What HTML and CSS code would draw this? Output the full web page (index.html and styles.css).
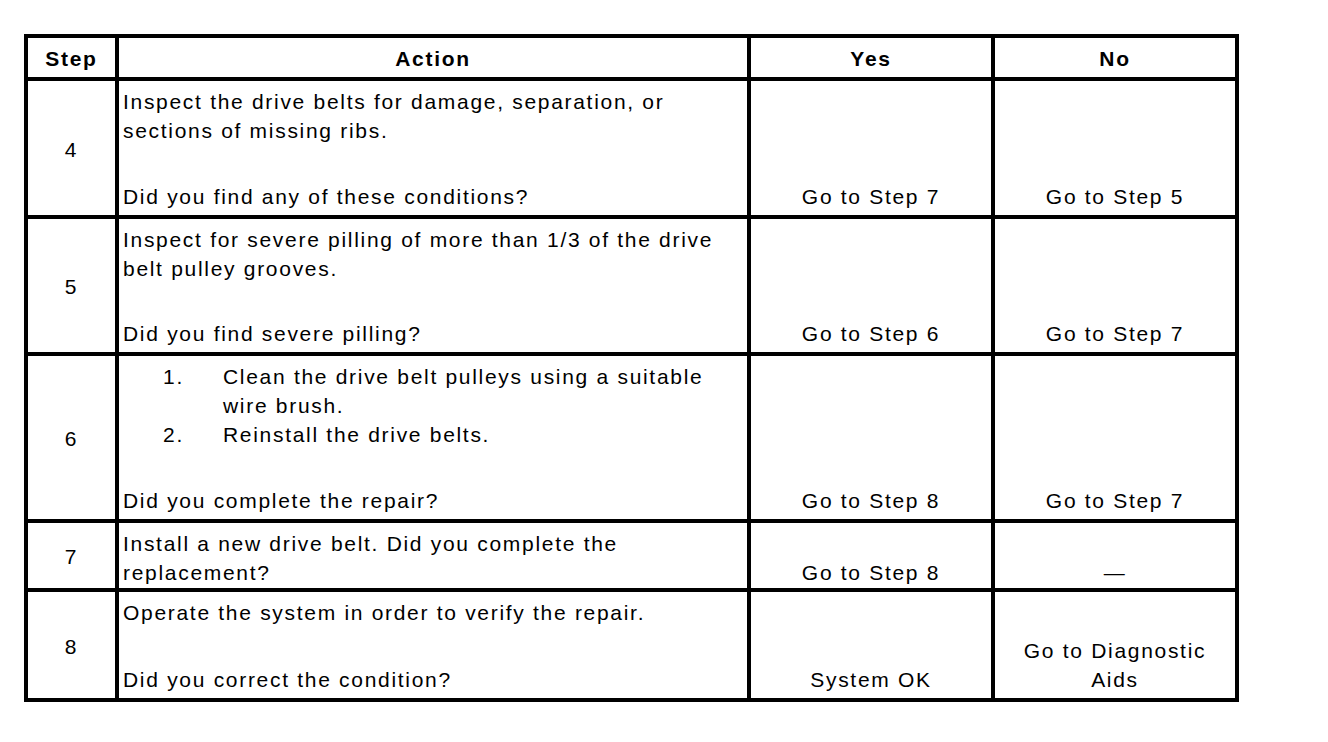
FILE: index.html
```html
<!DOCTYPE html>
<html>
<head>
<meta charset="utf-8">
<link rel="stylesheet" href="styles.css">
</head>
<body>
<div class="table">
  <div class="cell head">Step</div>
  <div class="cell head">Action</div>
  <div class="cell head">Yes</div>
  <div class="cell head">No</div>

  <div class="cell step">4</div>
  <div class="cell action">
    <p>Inspect the drive belts for damage, separation, or sections of missing ribs.</p>
    <p class="question">Did you find any of these conditions?</p>
  </div>
  <div class="cell result">Go to Step 7</div>
  <div class="cell result">Go to Step 5</div>

  <div class="cell step">5</div>
  <div class="cell action">
    <p>Inspect for severe pilling of more than 1/3 of the drive belt pulley grooves.</p>
    <p class="question">Did you find severe pilling?</p>
  </div>
  <div class="cell result">Go to Step 6</div>
  <div class="cell result">Go to Step 7</div>

  <div class="cell step">6</div>
  <div class="cell action">
    <ol class="list">
      <li><span class="num">1.</span><span>Clean the drive belt pulleys using a suitable wire brush.</span></li>
      <li><span class="num">2.</span><span>Reinstall the drive belts.</span></li>
    </ol>
    <p class="question">Did you complete the repair?</p>
  </div>
  <div class="cell result">Go to Step 8</div>
  <div class="cell result">Go to Step 7</div>

  <div class="cell step">7</div>
  <div class="cell action">
    <p>Install a new drive belt. Did you complete the replacement?</p>
  </div>
  <div class="cell result short">Go to Step 8</div>
  <div class="cell result short">—</div>

  <div class="cell step">8</div>
  <div class="cell action">
    <p>Operate the system in order to verify the repair.</p>
    <p class="question">Did you correct the condition?</p>
  </div>
  <div class="cell result">System OK</div>
  <div class="cell result">Go to Diagnostic<br>Aids</div>
</div>
</body>
</html>
```

FILE: styles.css
```css
html, body {
  margin: 0;
  padding: 0;
  background: #ffffff;
}

body {
  font-family: "Liberation Sans", Arial, sans-serif;
  font-size: 21px;
  line-height: 29px;
  letter-spacing: 1.7px;
  color: #000000;
}

.table {
  display: grid;
  grid-template-columns: 87px 628px 240px 240px;
  grid-template-rows: 39px 134px 133px 163px 65px 106px;
  gap: 4px;
  padding: 4px;
  background: #000000;
  width: max-content;
  margin: 34px 0 0 24px;
}

.cell {
  background: #ffffff;
  display: flex;
  flex-direction: column;
}

.head {
  font-weight: bold;
  align-items: center;
  justify-content: center;
  padding-top: 2px;
}

.step {
  align-items: center;
  justify-content: center;
  padding-top: 2px;
}

.action {
  padding: 6px 4px 4px 4px;
}

.action p {
  margin: 0;
  width: 600px;
}

.action .question {
  margin-top: auto;
}

.result {
  align-items: center;
  justify-content: flex-end;
  text-align: center;
  padding-bottom: 4px;
}

.result.short {
  padding-bottom: 1px;
}

.list {
  list-style: none;
  margin: 0;
  padding: 0 0 0 40px;
}

.list li {
  display: grid;
  grid-template-columns: 60px 500px;
}
```
